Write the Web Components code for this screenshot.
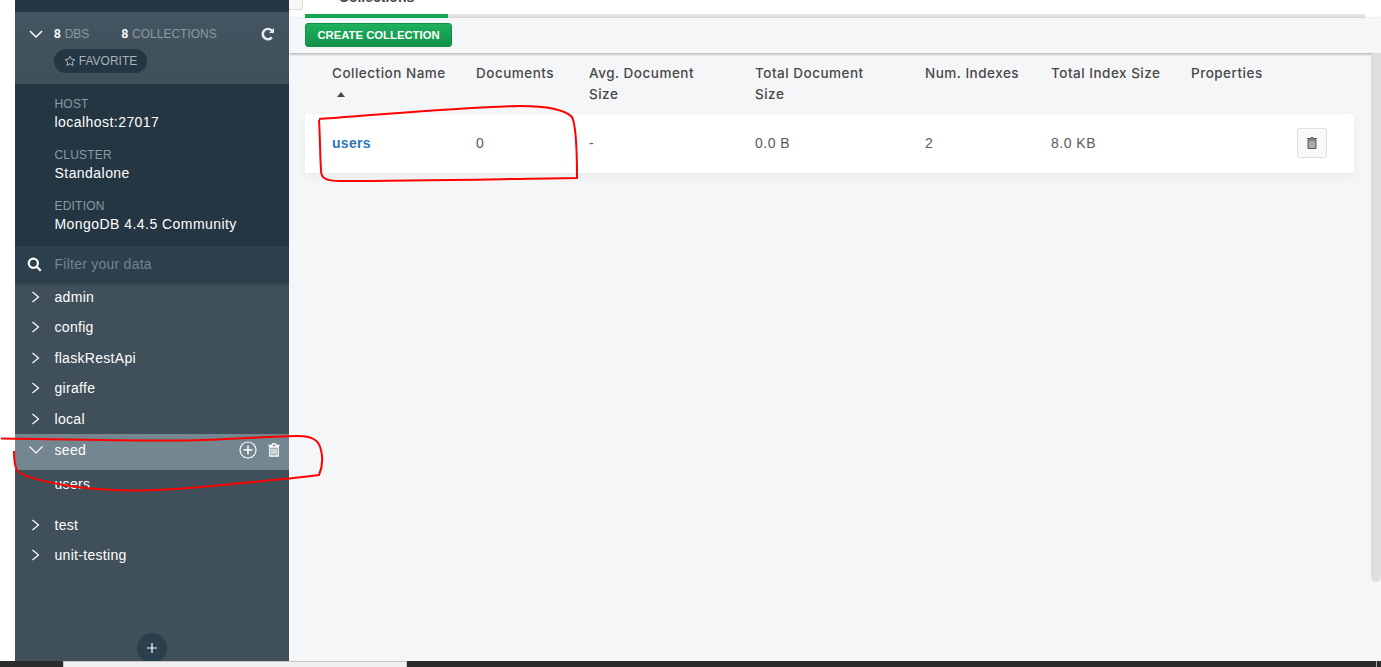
<!DOCTYPE html>
<html>
<head>
<meta charset="utf-8">
<title>Collections</title>
<style>
  html, body { margin: 0; height: 667px; overflow: hidden; background: #fff; }
  body { font-family: "Liberation Sans", Arial, sans-serif; }
</style>
</head>
<body>
<compass-app></compass-app>

<script>
const databases = ['admin', 'config', 'flaskRestApi', 'giraffe', 'local'];
const databasesAfter = ['test', 'unit-testing'];

class DbItem extends HTMLElement {
  constructor() {
    super();
    this.attachShadow({ mode: 'open' });
    const open = this.hasAttribute('open');
    this.shadowRoot.innerHTML = `
      <style>
        :host { display: block; }
        .row {
          height: 30.5px;
          display: flex;
          align-items: center;
          color: #fff;
          font-size: 14px;
          letter-spacing: .3px;
        }
        :host([open]) .row { height: 36px; box-sizing: border-box; padding-bottom: 4px; background: #74868f; }
        svg.arrow { width: 14px; height: 12px; margin-left: 14px; margin-right: 11.5px; fill: none; stroke: #fff; stroke-width: 1.2; }
        .actions { margin-left: auto; margin-right: 8px; display: flex; align-items: center; gap: 10px; }
        .actions svg { display: block; fill: none; stroke: #fff; }
        .kids { height: 39.5px; padding-left: 39.5px; color: #fff; font-size: 14px; letter-spacing: .3px; line-height: 28px; }
      </style>
      <div class="row">
        <svg class="arrow" viewBox="0 0 14 12">
          ${open ? '<path d="M.5 2.5L7 9l6.5-6.5"/>' : '<path d="M3.5 1l6 5-6 5"/>'}
        </svg>
        <slot></slot>
        ${open ? `<div class="actions">
          <svg width="18" height="18" viewBox="0 0 18 18" stroke-width="1.2"><circle cx="9" cy="9" r="8"/><path d="M9 4.5v9M4.5 9h9" stroke-width="1.5"/></svg>
          <svg width="14" height="14" viewBox="0 0 14 14" stroke-width="1.3"><path d="M2.8 4h8.400v9H2.800zM1.500 2.500h3.500l.5-1.500h3l.5 1.500h3.500M5 5.500v6M7 5.500v6M9 5.500v6"/></svg>
        </div>` : ''}
      </div>
      ${open ? '<div class="kids"><slot name="kids"></slot></div>' : ''}
    `;
  }
}

class InfoBlock extends HTMLElement {
  constructor() {
    super();
    this.attachShadow({ mode: 'open' });
    this.shadowRoot.innerHTML = `
      <style>
        :host { display: block; height: 51px; padding-left: 39.5px; }
        .label { color: #8b9aa3; font-size: 12px; line-height: 15px; letter-spacing: .2px; }
        .value { color: #fff; font-size: 14px; line-height: 21px; letter-spacing: .45px; }
      </style>
      <div class="label">${this.getAttribute('label')}</div>
      <div class="value"><slot></slot></div>
    `;
  }
}

class InstanceSidebar extends HTMLElement {
  constructor() {
    super();
    this.attachShadow({ mode: 'open' });
    this.shadowRoot.innerHTML = `
      <style>
        :host {
          display: flex;
          flex-direction: column;
          width: 274px;
          height: 661px;
          background: #3f505a;
          position: relative;
          flex: none;
          overflow: hidden;
        }
        .top { height: 12px; background: #243642; flex: none; }
        .stats { height: 72px; flex: none; box-sizing: border-box; background: linear-gradient(#435560, #3f505a); padding-top: 14px; }
        .line { display: flex; align-items: center; height: 15px; font-size: 12px; color: #8b9aa3; }
        .line svg.down { width: 14px; height: 12px; margin-left: 14px; margin-right: 11px; fill: none; stroke: #fff; stroke-width: 1.5; }
        .line b { color: #fff; font-size: 12px; margin-right: 4px; }
        .cols { margin-left: 32px; }
        .line svg.sync { margin-left: auto; margin-right: 14px; fill: #e8ecee; }
        .fav {
          margin: 8px 0 0 39px;
          width: 93px;
          height: 24px;
          border-radius: 12px;
          background: #243642;
          color: #a8b3ba;
          font-size: 12px;
          display: flex;
          align-items: center;
          justify-content: center;
          gap: 3px;
        }
        .fav svg { fill: none; stroke: #a8b3ba; }
        .info { height: 162px; flex: none; box-sizing: border-box; background: #243642; padding-top: 13px; }
        .filter {
          height: 36px;
          flex: none;
          background: #2b3f4c;
          display: flex;
          align-items: center;
          box-shadow: 0 2px 3px rgba(0,0,0,.25);
          position: relative;
          color: #73848e;
          font-size: 14px;
          letter-spacing: .25px;
        }
        .filter svg { margin-left: 12px; margin-right: 12.5px; fill: none; stroke: #fff; stroke-width: 2.2; }
        .list { margin-top: -.3px; }
        .add {
          position: absolute;
          left: 122px;
          bottom: -2px;
          width: 30px;
          height: 30px;
          border-radius: 50%;
          background: #2b3f4c;
          display: flex;
          align-items: center;
          justify-content: center;
        }
        .add svg { stroke: #fff; stroke-width: 1.2; fill: none; margin-top: -1px; }
      </style>
      <div class="top"></div>
      <div class="stats">
        <div class="line">
          <svg class="down" viewBox="0 0 14 12"><path d="M1 3l6 6 6-6"/></svg>
          <span><b>8</b>DBS</span>
          <span class="cols"><b>8</b>COLLECTIONS</span>
          <svg class="sync" width="14" height="14" viewBox="0 0 14 14"><path d="M13 1v5H8l1.800-1.800A4 4 0 0 0 3 7a4 4 0 0 0 7 2.600l1.800 1.700A6.500 6.500 0 0 1 .5 7 6.500 6.500 0 0 1 11.400 2.600z"/></svg>
        </div>
        <div class="fav">
          <svg width="12" height="12" viewBox="0 0 12 12"><path d="M6 1l1.500 3.200 3.500.4-2.600 2.400.7 3.500L6 8.800 2.900 10.500l.7-3.500L1 4.600l3.500-.4z"/></svg>
          FAVORITE
        </div>
      </div>
      <div class="info">
        <info-block label="HOST">localhost:27017</info-block>
        <info-block label="CLUSTER">Standalone</info-block>
        <info-block label="EDITION">MongoDB 4.4.5 Community</info-block>
      </div>
      <div class="filter">
        <svg width="15" height="15" viewBox="0 0 15 15"><circle cx="6.3" cy="6.3" r="4.6"/><path d="M9.800 9.800l4 4"/></svg>
        Filter your data
      </div>
      <div class="list">
        ${databases.map(d => `<db-item>${d}</db-item>`).join('')}
        <db-item open>seed<span slot="kids">users</span></db-item>
        ${databasesAfter.map(d => `<db-item>${d}</db-item>`).join('')}
      </div>
      <div class="add"><svg width="10" height="10" viewBox="0 0 10 10"><path d="M5 0v10M0 5h10"/></svg></div>
    `;
  }
}

// column widths come from where the header texts start in the table
const columnGrid = '144px 113px 166px 170px 126px 140px 1fr';

class CollectionsTable extends HTMLElement {
  constructor() {
    super();
    this.attachShadow({ mode: 'open' });
    this.shadowRoot.innerHTML = `
      <style>
        :host { display: block; margin-right: 27px; font-size: 14px; letter-spacing: .5px; }
        .head, .row { display: grid; grid-template-columns: ${columnGrid}; padding-left: 27px; }
        .head { height: 61px; box-sizing: border-box; padding-top: 10px; color: #494747; font-weight: 500; line-height: 21px; font-family: Inter, "Liberation Sans", sans-serif; font-size: 13.5px; }
        .caret { width: 0; height: 0; border: 4px solid transparent; border-top: 0; border-bottom: 5px solid #494747; margin: 8px 0 0 5px; }
        .row {
          height: 59px;
          box-sizing: border-box;
          padding-bottom: 2px;
          align-items: center;
          background: #fff;
          box-shadow: 0 4px 10px rgba(0,0,0,.05);
          color: #5b5b5b;
        }
        .name { color: #2d76b7; font-weight: bold; letter-spacing: .3px; }
        .del { display: flex; justify-content: flex-end; padding-right: 27px; }
        button.trash {
          width: 30px;
          height: 30px;
          padding: 0;
          background: #f9f9f9;
          border: 1px solid #e0e0e0;
          border-radius: 3px;
          display: flex;
          align-items: center;
          justify-content: center;
        }
        button.trash svg { fill: #aaa; stroke: #555; }
      </style>
      <div class="head">
        <div>Collection Name<div class="caret"></div></div>
        <div>Documents</div>
        <div>Avg. Document<br>Size</div>
        <div>Total Document<br>Size</div>
        <div>Num. Indexes</div>
        <div>Total Index Size</div>
        <div>Properties</div>
      </div>
      <div class="row">
        <div class="name">users</div>
        <div>0</div>
        <div>-</div>
        <div>0.0 B</div>
        <div>2</div>
        <div>8.0 KB</div>
        <div class="del">
          <button class="trash"><svg width="14" height="14" viewBox="0 0 14 14"><path d="M3 4h8v8.500H3zM2.500 2.500h3l.5-1h2l.5 1h3v.5h-9z"/></svg></button>
        </div>
      </div>
    `;
  }
}

class CollectionsView extends HTMLElement {
  constructor() {
    super();
    this.attachShadow({ mode: 'open' });
    this.shadowRoot.innerHTML = `
      <style>
        :host {
          display: flex;
          flex-direction: column;
          flex: 1;
          min-width: 0;
          height: 661px;
          background: #f5f6f7;
          color: #494747;
          overflow: hidden;
          position: relative;
        }
        .tabs { height: 18px; background: #fff; display: flex; flex: none; }
        .back { width: 14px; height: 10px; box-sizing: border-box; border: 1px solid #dcdcdc; border-top: 0; border-left: 0; border-radius: 0 0 3px 0; background: #f7f7f7; }
        .tabline { flex: 1; margin: 0 16px 0 2px; height: 18px; border-bottom: 4px solid #e4e4e4; box-sizing: border-box; position: relative; }
        .tab {
          width: 143px;
          height: 18px;
          box-sizing: border-box;
          border-bottom: 4px solid #13aa52;
          overflow: hidden;
          font-size: 14px;
          line-height: 14px;
          text-align: center;
          font-weight: bold;
        }
        .tab span { display: block; margin-top: -10px; color: #494747; }
        .toolbar {
          height: 35px;
          box-sizing: border-box;
          padding: 5px 0 0 16px;
          flex: none;
          background: #f5f6f7;
          box-shadow: 0 1px 3px rgba(0,0,0,.35);
          position: relative;
        }
        .create {
          width: 147px;
          height: 24px;
          padding: 0;
          box-sizing: border-box;
          border: 1px solid #0f8f45;
          border-radius: 3px;
          background: linear-gradient(#1eb15c, #119149);
          color: #fff;
          font: bold 11.3px "Liberation Sans", sans-serif;
          display: block;
        }
        .body { padding-left: 16px; flex: 1; }
        .scroll { position: absolute; right: 0; top: 53px; width: 10px; height: 529px; background: #dcdee0; border-radius: 4px 0 5px 5px; }
      </style>
      <div class="tabs">
        <div class="back"></div>
        <div class="tabline"><div class="tab"><span>Collections</span></div></div>
      </div>
      <div class="toolbar"><button class="create">CREATE COLLECTION</button></div>
      <div class="body"><collections-table></collections-table></div>
      <div class="scroll"></div>
    `;
  }
}

class CompassApp extends HTMLElement {
  constructor() {
    super();
    this.attachShadow({ mode: 'open' });
    this.shadowRoot.innerHTML = `
      <style>
        :host { display: block; width: 1381px; height: 667px; position: relative; overflow: hidden; }
        .main { display: flex; padding-left: 15px; height: 661px; }
        .taskbar { height: 6px; background: #2b2b2b; position: relative; display: flex; }
        .box { margin-left: 63px; width: 344px; height: 6px; box-sizing: border-box; background: #f0f0f0; border: 1px solid #c4c4c4; border-bottom: 0; }
        .tick { margin-left: auto; margin-right: 4px; width: 1px; background: #aaa; }
        svg.marks { position: absolute; left: 0; top: 0; pointer-events: none; }
      </style>
      <div class="main">
        <instance-sidebar></instance-sidebar>
        <collections-view></collections-view>
      </div>
      <div class="taskbar"><div class="box"></div><div class="tick"></div></div>
      <svg class="marks" width="1381" height="667" fill="none" stroke="#f00" stroke-width="2">
        <path d="M1 438.500C60 439 130 441 180 440.500C230 440 270 436 298 436C312 436 319 440 321 450C323 458 322 468 319 475C300 478 260 481 200 487C160 491 110 492 70 486C45 482 22 477 17 470C14 465 14 458 14 451"/>
        <path d="M319 119C380 115 460 107 520 106C550 106 565 110 572 117C576 125 577 150 577 178C500 179 420 181 340 181C325 181 321 178 321 170C320 155 320 135 319 120"/>
      </svg>
    `;
  }
}

customElements.define('db-item', DbItem);
customElements.define('info-block', InfoBlock);
customElements.define('instance-sidebar', InstanceSidebar);
customElements.define('collections-table', CollectionsTable);
customElements.define('collections-view', CollectionsView);
customElements.define('compass-app', CompassApp);
</script>
</body>
</html>
